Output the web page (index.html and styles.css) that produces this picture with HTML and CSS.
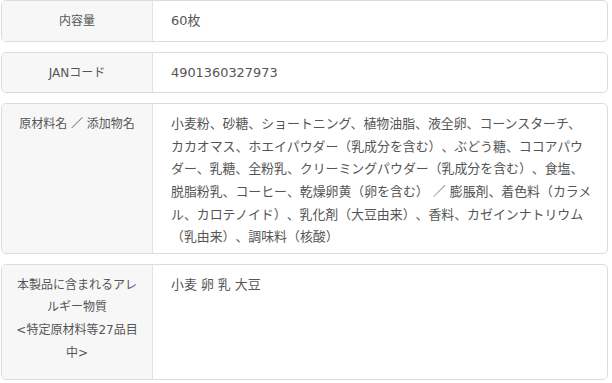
FILE: index.html
```html
<!DOCTYPE html>
<html lang="ja">
<head>
<meta charset="utf-8">
<title>商品情報</title>
<link rel="stylesheet" href="styles.css">
</head>
<body>
<div class="spec">
  <div class="spec-row">
    <div class="spec-label">内容量</div>
    <div class="spec-value">60枚</div>
  </div>
  <div class="spec-row">
    <div class="spec-label">JANコード</div>
    <div class="spec-value">4901360327973</div>
  </div>
  <div class="spec-row spec-row--ingredients">
    <div class="spec-label">原材料名 ／ 添加物名</div>
    <div class="spec-value">小麦粉、砂糖、ショートニング、植物油脂、液全卵、コーンスターチ、<br>カカオマス、ホエイパウダー（乳成分を含む）、ぶどう糖、ココアパウ<br>ダー、乳糖、全粉乳、クリーミングパウダー（乳成分を含む）、食塩、<br>脱脂粉乳、コーヒー、乾燥卵黄（卵を含む） ／ 膨脹剤、着色料（カラメ<br>ル、カロテノイド）、乳化剤（大豆由来）、香料、カゼインナトリウム<br>（乳由来）、調味料（核酸）</div>
  </div>
  <div class="spec-row spec-row--allergens">
    <div class="spec-label">本製品に含まれるアレルギー物質<br>&lt;特定原材料等27品目中&gt;</div>
    <div class="spec-value">小麦 卵 乳 大豆</div>
  </div>
</div>
</body>
</html>
```
FILE: styles.css
```css
html, body {
  margin: 0;
  padding: 0;
  background: #fff;
}

body {
  padding: 0 0 0 1px;
  font-family: "DejaVu Sans", "Noto Sans CJK JP", sans-serif;
  color: #555;
  text-spacing-trim: space-all;
  font-feature-settings: "chws" 0, "halt" 0;
}

.spec {
  display: flex;
  flex-direction: column;
  gap: 10px;
  width: 607px;
}

.spec-row {
  display: flex;
  border: 1px solid #dcdcdc;
  border-radius: 5px;
  overflow: hidden;
  line-height: 22.6px;
}

.spec-label {
  flex: 0 0 151px;
  box-sizing: border-box;
  padding: 9px 14px 8px;
  background: #f7f7f7;
  border-right: 1px solid #e2e2e2;
  font-size: 12px;
  text-align: center;
}

.spec-value {
  flex: 1;
  padding: 9px 8px 8px 18px;
  font-size: 12.9px;
}

.spec-row--ingredients .spec-value {
  padding-bottom: 4px;
}

.spec-row--allergens .spec-label {
  padding-bottom: 15px;
}
```
